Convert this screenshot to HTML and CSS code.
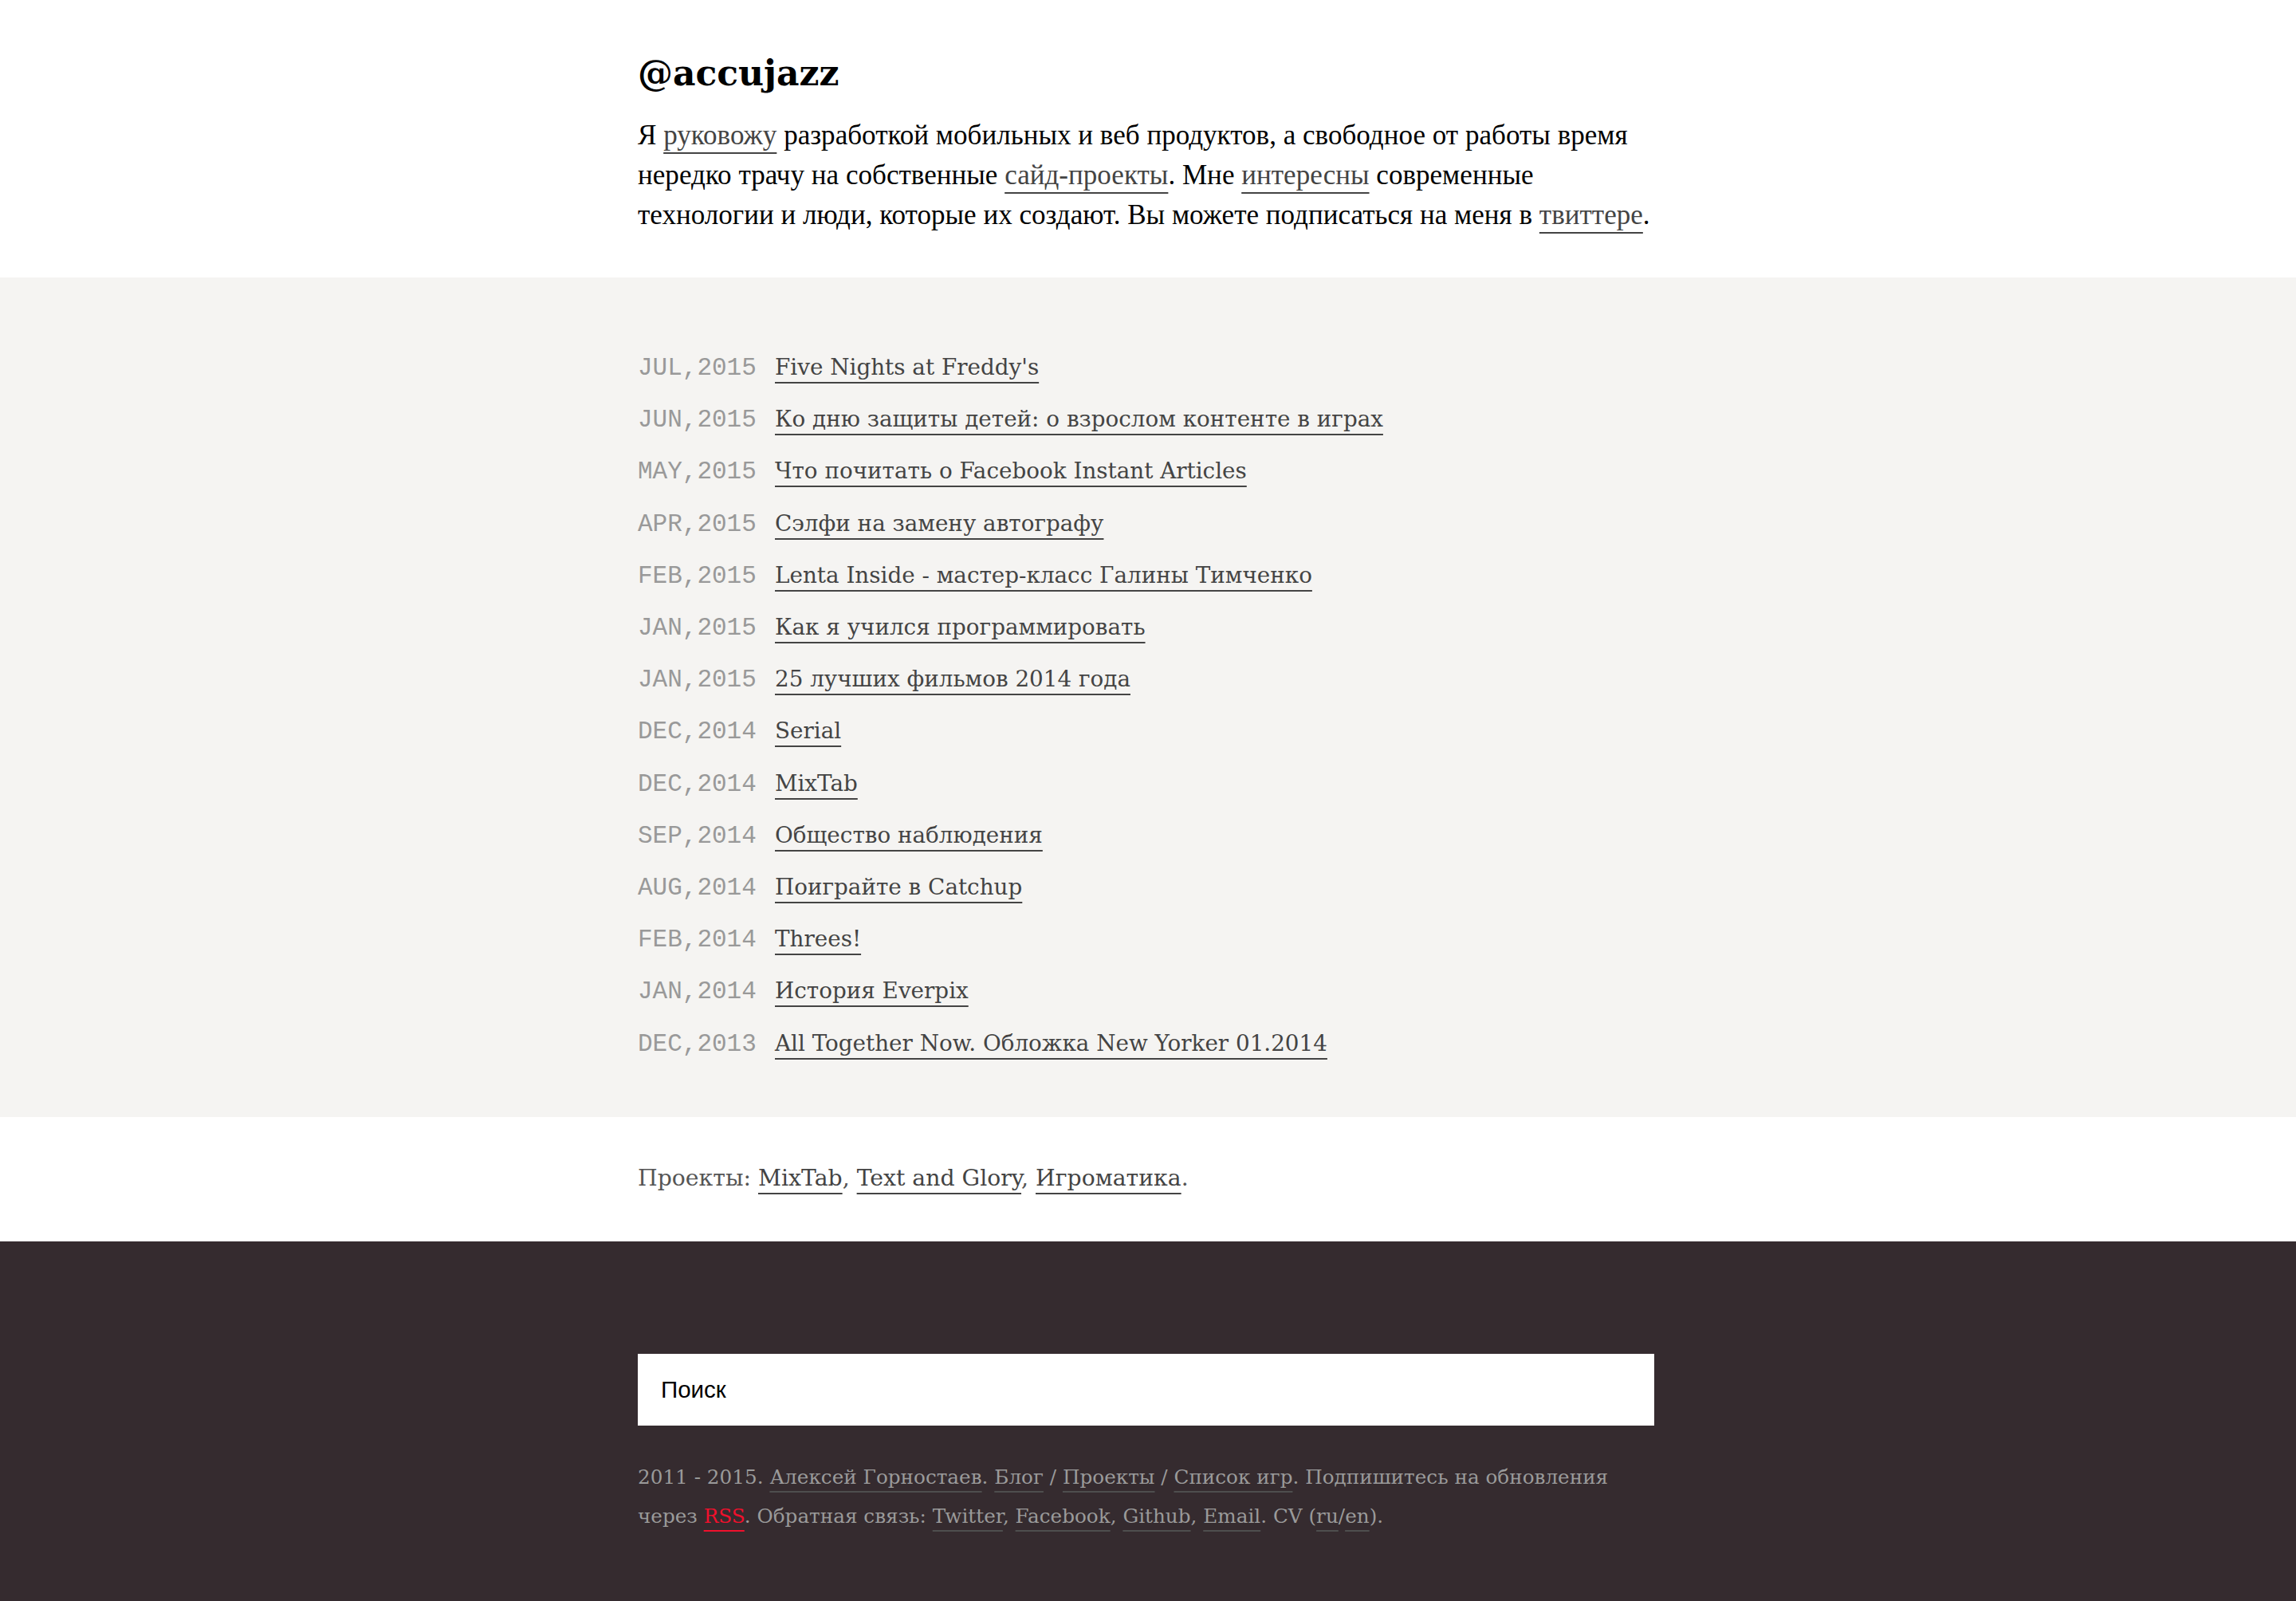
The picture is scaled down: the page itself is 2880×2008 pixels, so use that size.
FILE: index.html
```html
<!DOCTYPE html>
<html lang="ru">
<head>
<meta charset="utf-8">
<title>@accujazz</title>
<link rel="stylesheet" href="styles.css">
</head>
<body>
<header class="intro">
  <div class="wrap">
    <h1 class="logo">@accujazz</h1>
    <p class="about">Я <a href="#">руковожу</a> разработкой мобильных и веб продуктов, а свободное от работы время нередко трачу на собственные <a href="#">сайд-проекты</a>. Мне <a href="#">интересны</a> современные технологии и люди, которые их создают. Вы можете подписаться на меня в <a href="#">твиттере</a>.</p>
  </div>
</header>

<main class="posts">
  <div class="wrap">
    <ul class="post-list">
      <li class="post"><span class="date">JUL,2015</span><a href="#">Five Nights at Freddy's</a></li>
      <li class="post"><span class="date">JUN,2015</span><a href="#">Ко дню защиты детей: о взрослом контенте в играх</a></li>
      <li class="post"><span class="date">MAY,2015</span><a href="#">Что почитать о Facebook Instant Articles</a></li>
      <li class="post"><span class="date">APR,2015</span><a href="#">Сэлфи на замену автографу</a></li>
      <li class="post"><span class="date">FEB,2015</span><a href="#">Lenta Inside - мастер-класс Галины Тимченко</a></li>
      <li class="post"><span class="date">JAN,2015</span><a href="#">Как я учился программировать</a></li>
      <li class="post"><span class="date">JAN,2015</span><a href="#">25 лучших фильмов 2014 года</a></li>
      <li class="post"><span class="date">DEC,2014</span><a href="#">Serial</a></li>
      <li class="post"><span class="date">DEC,2014</span><a href="#">MixTab</a></li>
      <li class="post"><span class="date">SEP,2014</span><a href="#">Общество наблюдения</a></li>
      <li class="post"><span class="date">AUG,2014</span><a href="#">Поиграйте в Catchup</a></li>
      <li class="post"><span class="date">FEB,2014</span><a href="#">Threes!</a></li>
      <li class="post"><span class="date">JAN,2014</span><a href="#">История Everpix</a></li>
      <li class="post"><span class="date">DEC,2013</span><a href="#">All Together Now. Обложка New Yorker 01.2014</a></li>
    </ul>
  </div>
</main>

<section class="projects">
  <div class="wrap">
    <p class="projects-line">Проекты: <a href="#">MixTab</a>, <a href="#">Text and Glory</a>, <a href="#">Игроматика</a>.</p>
  </div>
</section>

<footer class="footer">
  <div class="wrap">
    <form class="search">
      <input class="search-input" type="text" placeholder="Поиск">
    </form>
    <p class="credits">2011 - 2015. <a href="#">Алексей Горностаев</a>. <a href="#">Блог</a> / <a href="#">Проекты</a> / <a href="#">Список игр</a>. Подпишитесь на обновления через <a href="#" class="rss">RSS</a>. Обратная связь: <a href="#">Twitter</a>, <a href="#">Facebook</a>, <a href="#">Github</a>, <a href="#">Email</a>. CV (<a href="#">ru</a>/<a href="#">en</a>).</p>
  </div>
</footer>
</body>
</html>
```

FILE: styles.css
```css
html, body {
  margin: 0;
  padding: 0;
  background: #ffffff;
}

body {
  font-family: "DejaVu Serif", serif;
  color: #000;
}

.wrap {
  width: 1275px;
  padding-right: 5px;
  margin: 0 auto;
}

a {
  text-decoration-line: underline;
  text-decoration-thickness: 2px;
  text-underline-offset: 9px;
  text-decoration-skip-ink: none;
}

/* Intro */
.intro {
  padding: 66px 0 53px;
}

.logo {
  margin: 0 0 27px;
  font-family: "DejaVu Serif", serif;
  font-weight: bold;
  font-size: 44px;
  line-height: 52px;
  color: #000;
}

.about {
  margin: 0 -10px 0 0;
  font-family: "Liberation Serif", "Times New Roman", serif;
  font-size: 35.1px;
  line-height: 50px;
  color: #000;
}

.about a {
  color: #444;
  text-decoration-color: #444;
  text-underline-offset: 10px;
}

/* Posts */
.posts {
  background: #f5f4f2;
  padding: 80px 0 60px;
}

.post-list {
  list-style: none;
  margin: 0;
  padding: 0;
}

.post {
  font-size: 27.8px;
  line-height: 65.2px;
  white-space: nowrap;
}

.post a {
  color: #444;
  text-decoration-color: #444;
}

.date {
  display: inline-block;
  width: 172px;
  font-family: "Liberation Mono", "Courier New", monospace;
  font-size: 31px;
  line-height: 1;
  color: #999;
}

/* Projects */
.projects {
  padding: 52px 0 54px;
}

.projects-line {
  margin: 0;
  font-size: 28.3px;
  line-height: 50px;
  color: #555;
}

.projects-line a {
  color: #444;
  text-decoration-color: #444;
}

/* Footer */
.footer {
  background: #352b2f;
  padding: 141px 0 120px;
}

.search {
  margin: 0;
}

.search-input {
  display: block;
  box-sizing: border-box;
  width: 100%;
  height: 90px;
  margin: 0;
  padding: 0 29px;
  border: 0;
  background: #fff;
  font-family: "Liberation Sans", Arial, sans-serif;
  font-size: 29.5px;
  color: #000;
  outline: none;
}

.search-input::placeholder {
  color: #000;
  opacity: 1;
}

.credits {
  margin: 40px 0 0;
  font-size: 24.7px;
  line-height: 49.5px;
  color: #9a9a9a;
}

.credits a {
  color: #9a9a9a;
  text-decoration-color: #4e4e4e;
}

.credits a.rss {
  color: #f0102c;
  text-decoration-color: #f0102c;
}
```
